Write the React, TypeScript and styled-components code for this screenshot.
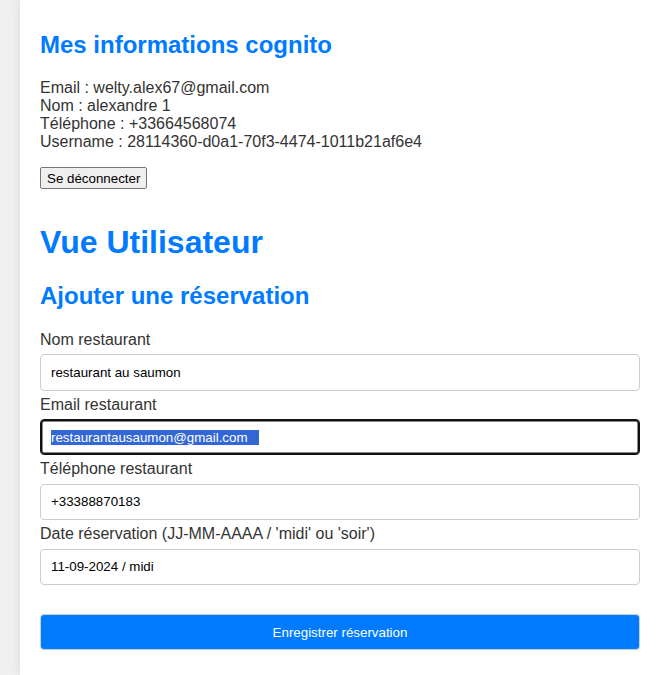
import React from "react";
import styled, { createGlobalStyle } from "styled-components";

const GlobalStyle = createGlobalStyle`
  html, body {
    overflow-x: hidden;
  }
  body {
    margin: 0;
    padding: 0 0 0 20px;
    background: #f0f0f0;
    font-family: "Liberation Sans", Arial, sans-serif;
    color: #333;
  }
`;

const Container = styled.div`
  box-sizing: border-box;
  width: 640px;
  min-height: 100vh;
  background: #ffffff;
  padding: 11px 20px 20px;
  box-shadow: 0 0 10px rgba(0, 0, 0, 0.1);
  overflow: hidden;
`;

const SectionTitle = styled.h2<{ $after?: number }>`
  font-size: 24px;
  font-weight: bold;
  color: #007bff;
  margin: 19.92px 0 ${(p) => p.$after ?? 19.92}px;
`;

const PageTitle = styled.h1`
  font-size: 32px;
  font-weight: bold;
  color: #007bff;
  margin: 35px 0 21.44px;
`;

const InfoText = styled.p`
  font-size: 16px;
  margin: 16px 0;
`;

const LogoutButton = styled.button`
  display: block;
  font-family: "Liberation Sans", Arial, sans-serif;
  font-size: 13.33px;
  color: #000;
  background: #efefef;
  border: 1px solid #767676;
  border-radius: 2px;
  padding: 3px 6px 2px;
  margin: 0;
  cursor: pointer;
`;

const Form = styled.form`
  display: flex;
  flex-direction: column;
`;

const Label = styled.label`
  display: block;
  font-size: 16px;
  line-height: 18.4px;
  color: #333;
  margin-bottom: 5px;
`;

const fieldBase = `
  box-sizing: border-box;
  width: 100%;
  height: 36.4px;
  flex-shrink: 0;
  padding: 10px;
  margin: 0 0 5px;
  font-family: "Liberation Sans", Arial, sans-serif;
  font-size: 13.33px;
  color: #000;
  background: #fff;
  border: 1px solid #ccc;
  border-radius: 4px;
`;

const TextInput = styled.input`
  ${fieldBase}
  outline: none;
`;

const FocusedField = styled.div`
  ${fieldBase}
  display: flex;
  align-items: center;
  border-color: #101010;
  box-shadow: inset 0 0 0 1.5px #101010;
  white-space: pre;
`;

const SelectedText = styled.span`
  background: #3367d6;
  color: #fff;
  padding-right: 11px;
`;

const SubmitButton = styled.button`
  box-sizing: border-box;
  width: 100%;
  height: 36px;
  margin-top: 24px;
  padding: 10px;
  font-family: "Liberation Sans", Arial, sans-serif;
  font-size: 13.33px;
  color: #fff;
  background: #007bff;
  border: 1px solid #ccc;
  border-radius: 4px;
  cursor: pointer;
`;

type FieldProps = { label: string; value: string; focused?: boolean };

const Field: React.FC<FieldProps> = ({ label, value, focused }) => (
  <>
    <Label>{label}</Label>
    {focused ? (
      <FocusedField>
        <SelectedText>{value}</SelectedText>
      </FocusedField>
    ) : (
      <TextInput type="text" defaultValue={value} />
    )}
  </>
);

export default function App() {
  return (
    <>
      <GlobalStyle />
      <Container>
        <SectionTitle>Mes informations cognito</SectionTitle>
        <InfoText>
          Email : welty.alex67@gmail.com
          <br />
          Nom : alexandre 1
          <br />
          Téléphone : +33664568074
          <br />
          Username : 28114360-d0a1-70f3-4474-1011b21af6e4
        </InfoText>
        <LogoutButton type="button">Se déconnecter</LogoutButton>

        <PageTitle>Vue Utilisateur</PageTitle>
        <SectionTitle $after={20.5}>Ajouter une réservation</SectionTitle>
        <Form onSubmit={(e) => e.preventDefault()}>
          <Field label="Nom restaurant" value="restaurant au saumon" />
          <Field label="Email restaurant" value="restaurantausaumon@gmail.com" focused />
          <Field label="Téléphone restaurant" value="+33388870183" />
          <Field label="Date réservation (JJ-MM-AAAA / 'midi' ou 'soir')" value="11-09-2024 / midi" />
          <SubmitButton type="submit">Enregistrer réservation</SubmitButton>
        </Form>
      </Container>
    </>
  );
}
